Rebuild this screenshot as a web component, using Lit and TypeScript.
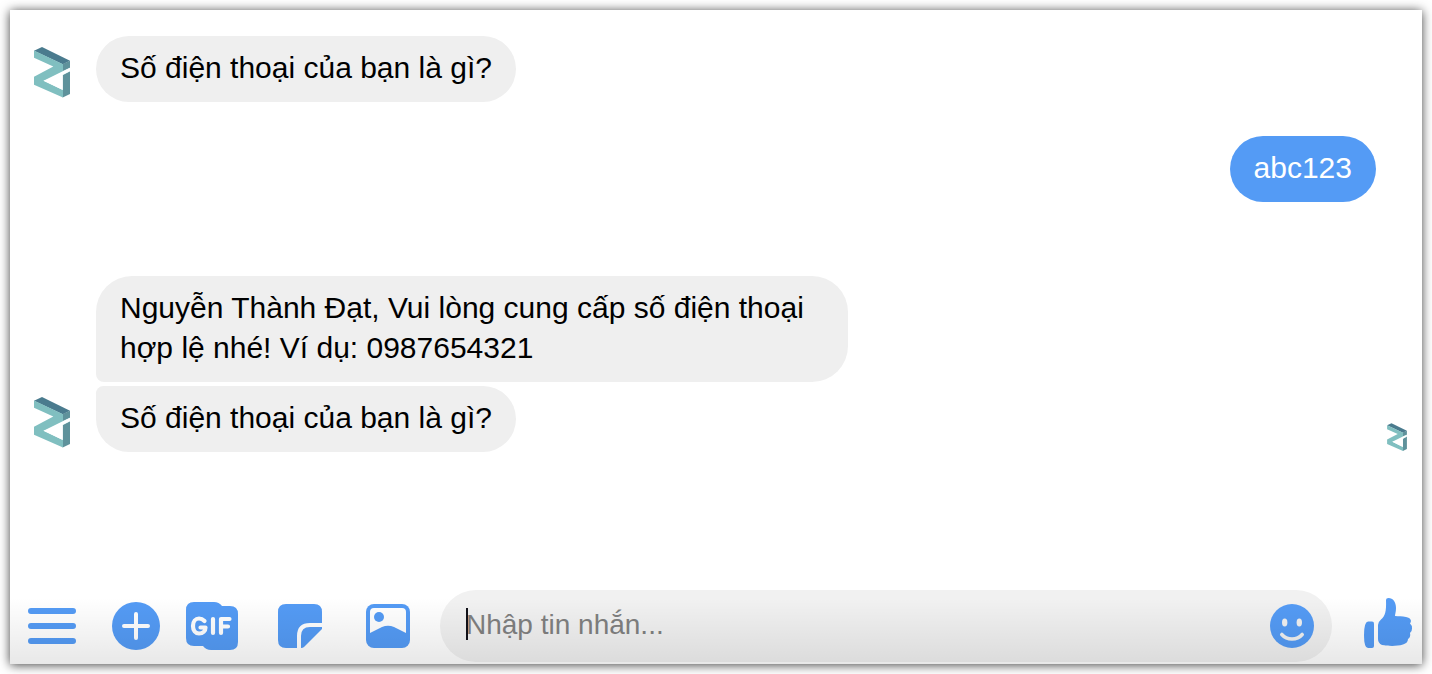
import { LitElement, html, css } from "lit";
import { customElement, state } from "lit/decorators.js";

@customElement("brand-mark")
class BrandMark extends LitElement {
  static styles = css`
    :host { display: block; }
    svg { display: block; width: 100%; height: 100%; }
  `;
  render() {
    return html`<svg viewBox="0 0 40 52" aria-hidden="true">
      <path fill="#5f929b" d="M38 14.700V21.700L30.700 25.200V18ZM38 25.300V48L30.700 51.500V29Z"/>
      <path fill="#4a7b8e" d="M2 4.700 10 1 38 14.700 30.700 18.200Z"/>
      <path fill="#80bfc0" d="M2 4.500 31 18.200V25.200L38 22V25.300L30.700 29 31 29 11.500 34.700 31 44V51.500L2 38.700V30.700L21.300 20.500 2 11.700Z"/>
      <path fill="#fff" d="M11.500 34.700 30.700 25.300 38 21.700V25.300L30.700 29V44Z"/>
    </svg>`;
  }
}

@customElement("app-root")
class AppRoot extends LitElement {
  @state() draft = "";

  static styles = css`
    :host {
      display: flex;
      box-sizing: border-box;
      min-height: 100vh;
      padding: 10px;
      background: #fff;
      font-family: "Liberation Sans", Arial, sans-serif;
      font-size: 30px;
      line-height: 40px;
      color: #000;
    }
    .chat {
      position: relative;
      flex: 1;
      display: flex;
      flex-direction: column;
      min-width: 0;
      background: #fff;
      box-shadow: 0 1px 10px rgba(0, 0, 0, 0.75);
    }
    .chat::after {
      content: "";
      position: absolute;
      inset: auto 0 0;
      height: 66px;
      background: linear-gradient(transparent, rgba(0, 0, 0, 0.09));
      pointer-events: none;
    }
    .log {
      flex: 1;
      display: flex;
      flex-direction: column;
      padding: 26px 14px 0 22px;
    }
    .row { display: flex; align-items: flex-end; gap: 24px; }
    .sent { justify-content: flex-end; padding: 34px 32px 74px 0; }
    .avatar { width: 40px; height: 52px; margin-bottom: 4px; flex: none; }
    .spacer { width: 40px; flex: none; }
    .bubble {
      max-width: 704px;
      padding: 12px 24px 14px;
      border-radius: 36px;
      background: #efefef;
    }
    .first { border-bottom-left-radius: 8px; margin-bottom: 4px; }
    .last { border-top-left-radius: 8px; }
    .mine { background: #549bf5; color: #fff; }
    .seen { width: 22px; height: 30px; margin-left: auto; }
    .composer {
      display: flex;
      align-items: center;
      padding: 0 10px 2px 18px;
    }
    button {
      display: block;
      flex: none;
      padding: 0;
      border: 0;
      background: none;
      color: #549bf5;
    }
    button svg { display: block; }
    .plus { margin-left: 36px; }
    .gif { margin-left: 26px; }
    .sticker { margin-left: 40px; }
    .photo { margin-left: 44px; }
    .like { margin-left: 32px; }
    .field {
      position: relative;
      flex: 1;
      display: flex;
      align-items: center;
      min-width: 0;
      height: 72px;
      margin-left: 30px;
      padding: 0 18px 0 26px;
      box-sizing: border-box;
      border-radius: 36px;
      background: #f1f1f1;
    }
    .caret {
      position: absolute;
      left: 26px;
      top: 18px;
      width: 2px;
      height: 32px;
      background: #111118;
    }
    input {
      flex: 1;
      min-width: 0;
      height: 40px;
      padding: 0 0 2px;
      border: 0;
      outline: 0;
      background: none;
      font: inherit;
      font-size: 28px;
      color: #000;
    }
    input::placeholder { color: #808080; opacity: 1; }
  `;

  render() {
    return html`<main class="chat">
      <section class="log" aria-label="Tin nhắn">
        <div class="row">
          <brand-mark class="avatar"></brand-mark>
          <div class="bubble">Số điện thoại của bạn là gì?</div>
        </div>
        <div class="row sent"><div class="bubble mine">abc123</div></div>
        <div class="row">
          <span class="spacer"></span>
          <div class="bubble first">Nguyễn Thành Đạt, Vui lòng cung cấp số điện thoại hợp lệ nhé! Ví dụ: 0987654321</div>
        </div>
        <div class="row">
          <brand-mark class="avatar"></brand-mark>
          <div class="bubble last">Số điện thoại của bạn là gì?</div>
          <brand-mark class="seen"></brand-mark>
        </div>
      </section>
      <form class="composer" @submit=${(e: Event) => e.preventDefault()}>
        <button type="button" aria-label="Menu">
          <svg width="48" height="36" viewBox="0 0 48 36" stroke="currentColor" stroke-width="6" stroke-linecap="round"><path d="M3 3H45M3 18H45M3 33H45"/></svg>
        </button>
        <button type="button" class="plus" aria-label="Thêm">
          <svg width="48" height="48" viewBox="0 0 48 48"><circle cx="24" cy="24" r="24" fill="currentColor"/><path d="M24 12V36M12 24H36" stroke="#fff" stroke-width="4" stroke-linecap="round"/></svg>
        </button>
        <button type="button" class="gif" aria-label="GIF">
          <svg width="52" height="48" viewBox="0 0 52 48"><path fill="currentColor" d="M8 0H28Q33 0 36 4H44Q52 4 52 12V40Q52 48 44 48H25Q20 48 17 44H8Q0 44 0 36V8Q0 0 8 0Z"/><path fill="none" stroke="#fff" stroke-width="4.200" stroke-linecap="round" stroke-linejoin="round" d="M18.500 19C16.500 17 15 16.500 13 16.500C9.500 16.500 7 19.500 7 24C7 28.500 9.500 31.500 13 31.500C17 31.500 19.500 29 19.500 25.500H14.500M27 17V31M35 31V17H43.500M35 24.500H42"/></svg>
        </button>
        <button type="button" class="sticker" aria-label="Nhãn dán">
          <svg width="44" height="44" viewBox="0 0 44 44" fill="currentColor"><path d="M8 0H36Q44 0 44 8V19H32Q19 19 19 32V44H8Q0 44 0 36V8Q0 0 8 0Z"/><path d="M44 23V25L26 43Q25 44 23 44V32Q23 23 32 23Z"/></svg>
        </button>
        <button type="button" class="photo" aria-label="Ảnh">
          <svg width="44" height="44" viewBox="0 0 44 44"><rect width="44" height="44" rx="8" fill="currentColor"/><path fill="#fff" d="M4 29V8Q4 4 8 4H36Q40 4 40 8V29L28 23Q22 20.500 16 23Z"/><circle cx="13" cy="13" r="5" fill="currentColor"/></svg>
        </button>
        <div class="field">
          <input aria-label="Nhập tin nhắn" placeholder="Nhập tin nhắn..." .value=${this.draft}
            @input=${(e: Event) => (this.draft = (e.target as HTMLInputElement).value)} />
          ${this.draft ? "" : html`<span class="caret"></span>`}
          <button type="button" aria-label="Biểu tượng cảm xúc">
            <svg width="44" height="44" viewBox="0 0 44 44"><circle cx="22" cy="22" r="22" fill="currentColor"/><ellipse cx="14.700" cy="18.500" rx="2.700" ry="4" fill="#f1f1f1"/><ellipse cx="29.300" cy="18.500" rx="2.700" ry="4" fill="#f1f1f1"/><path d="M11.800 30.500C17 36.500 27 36.500 32.200 30.500" fill="none" stroke="#f1f1f1" stroke-width="3.600" stroke-linecap="round"/></svg>
          </button>
        </div>
        <button type="button" class="like" aria-label="Thích">
          <svg width="48" height="56" viewBox="0 0 48 56" fill="currentColor"><path d="M4 23.500H8Q10 23.500 10 25.500V48Q10 50 8 50H4Q0 50 0 37T4 23.500Z"/><path d="M22 2Q22 0 24.500 0C29 0 32 4 32 10C32 14 31 16 31 18C35 18.500 38 18 42 19C47 20 48 23 46 25.500Q48 27 48 30.500Q48 34 46 35Q47 39 44 41Q44 45 39 46.500C32 48.500 24 48 18 47Q14 45 14 41V27Q14 24 17 21.500C21 18 22.500 14 22 2Z"/></svg>
        </button>
      </form>
    </main>`;
  }
}
